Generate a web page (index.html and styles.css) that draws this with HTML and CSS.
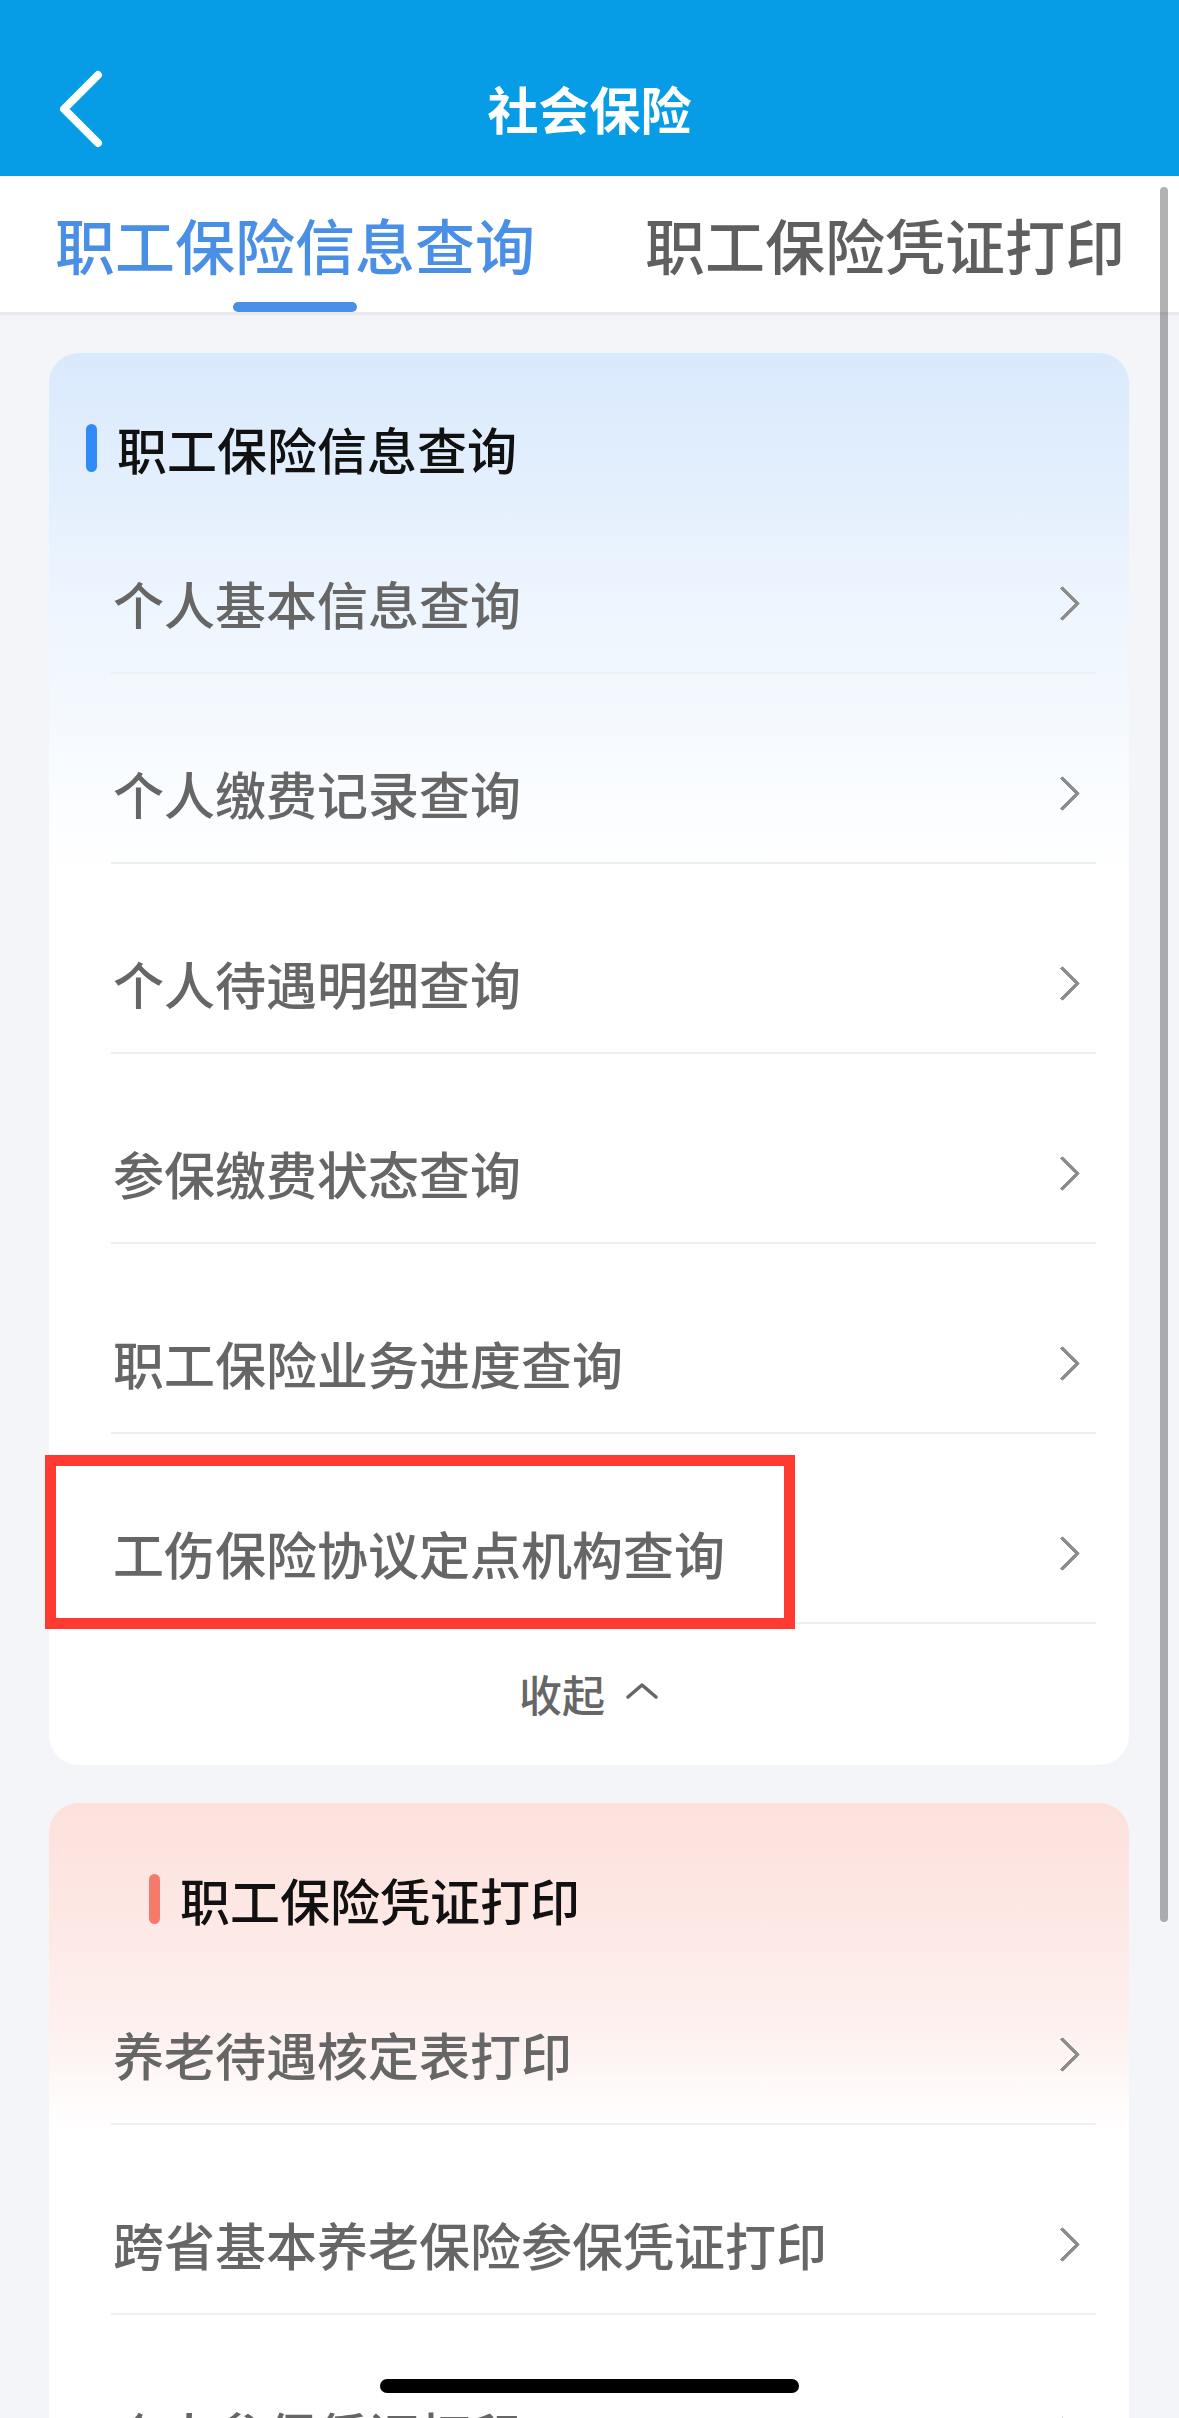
FILE: index.html
```html
<!DOCTYPE html>
<html lang="zh-CN">
<head>
    <meta charset="UTF-8">
    <meta name="viewport" content="width=device-width, initial-scale=1.0">
    <title>社会保险</title>
    <link rel="stylesheet" href="styles.css">
</head>
<body>
    <div class="screen">
        <header class="nav">
            <span class="nav-back">
                <svg width="46" height="78" viewBox="0 0 46 78"><path d="M40 5 L6 39 L40 73" fill="none" stroke="#fff" stroke-width="8" stroke-linecap="round" stroke-linejoin="round"/></svg>
            </span>
            <h1 class="nav-title">社会保险</h1>
            <span></span>
        </header>

        <nav class="tabs">
            <div class="tab active">职工保险信息查询</div>
            <div class="tab">职工保险凭证打印</div>
        </nav>

        <main class="content">
            <section class="card card-blue">
                <h2 class="card-title"><span class="mark-bar"></span>职工保险信息查询</h2>
                <ul class="list">
                    <li class="row"><span>个人基本信息查询</span><i class="arrow"></i></li>
                    <li class="row"><span>个人缴费记录查询</span><i class="arrow"></i></li>
                    <li class="row"><span>个人待遇明细查询</span><i class="arrow"></i></li>
                    <li class="row"><span>参保缴费状态查询</span><i class="arrow"></i></li>
                    <li class="row"><span>职工保险业务进度查询</span><i class="arrow"></i></li>
                    <li class="row"><span>工伤保险协议定点机构查询</span><i class="arrow"></i><b class="highlight"></b></li>
                </ul>
                <div class="fold">收起
                    <svg width="34" height="18" viewBox="0 0 34 18"><path d="M3 15 L17 3 L31 15" fill="none" stroke="#666" stroke-width="3.5" stroke-linecap="round" stroke-linejoin="round"/></svg>
                </div>
            </section>

            <section class="card card-red">
                <h2 class="card-title"><span class="mark-bar"></span>职工保险凭证打印</h2>
                <ul class="list">
                    <li class="row"><span>养老待遇核定表打印</span><i class="arrow"></i></li>
                    <li class="row"><span>跨省基本养老保险参保凭证打印</span><i class="arrow"></i></li>
                    <li class="row"><span>个人参保凭证打印</span><i class="arrow"></i></li>
                    <li class="row"><span>个人缴费证明打印</span><i class="arrow"></i></li>
                </ul>
            </section>
        </main>

        <div class="scroll-thumb"></div>
        <div class="home-bar"></div>
    </div>
</body>
</html>
```

FILE: styles.css
```css
/* Page */
body {
    margin: 0;
    padding: 0;
    background-color: #f4f5f9;
    font-family: "Noto Sans CJK SC", "Noto Sans", sans-serif;
    color: #333;
}

.screen {
    position: relative;
    width: 1179px;
    height: 2418px;
    overflow: hidden;
}

/* Navigation bar */
.nav {
    display: grid;
    grid-template-columns: 1fr auto 1fr;
    align-items: center;
    height: 136px;
    padding-top: 40px;
    background-color: #069ce6;
}

.nav-back {
    display: flex;
    padding-left: 58px;
    padding-top: 2px;
}

.nav-title {
    margin: 0;
    font-size: 51px;
    font-weight: 700;
    color: #fff;
    line-height: 60px;
}

/* Tabs */
.tabs {
    display: flex;
    gap: 110px;
    height: 136px;
    padding-left: 55px;
    background-color: #fff;
    border-bottom: 3px solid #e9eaee;
    white-space: nowrap;
}

.tab {
    display: flex;
    flex-direction: column;
    align-items: center;
    padding-top: 38px;
    font-size: 60px;
    line-height: 60px;
    font-weight: 500;
    color: #5f5f5f;
}

.tab.active {
    color: #4a8fe6;
}

.tab.active::after {
    content: "";
    margin-top: auto;
    width: 124px;
    height: 10px;
    border-radius: 5px;
    background-color: #4a8fe6;
}

/* Cards */
.content {
    display: flex;
    flex-direction: column;
    gap: 38px;
    padding: 38px 50px 0 49px;
}

.card {
    border-radius: 30px;
    background-color: #fff;
}

.card-blue {
    background: linear-gradient(180deg, #d9e9fc 0, #edf5fe 250px, #ffffff 520px);
}

.card-red {
    background: linear-gradient(180deg, #fde0db 0, #fdf0ee 220px, #ffffff 330px);
}

.card-title {
    display: flex;
    align-items: center;
    gap: 20px;
    margin: 0;
    padding: 65px 0 0 37px;
    font-size: 50px;
    line-height: 60px;
    font-weight: 500;
    color: #111;
}

.card-red .card-title {
    padding: 66px 0 0 100px;
}

.mark-bar {
    width: 11px;
    height: 48px;
    border-radius: 6px;
    background-color: #2f8cf6;
}

.card-red .mark-bar {
    height: 50px;
    background-color: #f47b6b;
}

/* List rows */
.list {
    list-style: none;
    margin: 6px 33px 0 62px;
    padding: 0;
}

.row {
    position: relative;
    display: flex;
    align-items: center;
    justify-content: space-between;
    padding: 89px 15px 39px 2px;
    border-bottom: 2px solid #eeeff2;
    font-size: 51px;
    line-height: 60px;
    font-weight: 500;
    color: #666;
}

.arrow {
    width: 21px;
    height: 21px;
    margin-right: 6px;
    border-top: 4px solid #8c8c8c;
    border-right: 4px solid #8c8c8c;
    border-radius: 2px;
    transform: rotate(45deg);
}

/* Red annotation frame */
.highlight {
    position: absolute;
    left: -66px;
    top: 21px;
    width: 750px;
    height: 174px;
    box-sizing: border-box;
    border: 11px solid #ff3a30;
}

.fold {
    display: flex;
    align-items: center;
    justify-content: center;
    gap: 20px;
    padding: 47px 0 50px;
    font-size: 43px;
    line-height: 44px;
    font-weight: 500;
    color: #666;
}

.fold svg {
    margin-top: -4px;
}

/* Overlays */
.scroll-thumb {
    position: absolute;
    left: 1160px;
    top: 187px;
    width: 8px;
    height: 1735px;
    border-radius: 4px;
    background-color: rgba(0, 0, 0, 0.3);
}

.home-bar {
    position: absolute;
    left: 380px;
    top: 2379px;
    width: 419px;
    height: 14px;
    border-radius: 7px;
    background-color: #000;
}
```
